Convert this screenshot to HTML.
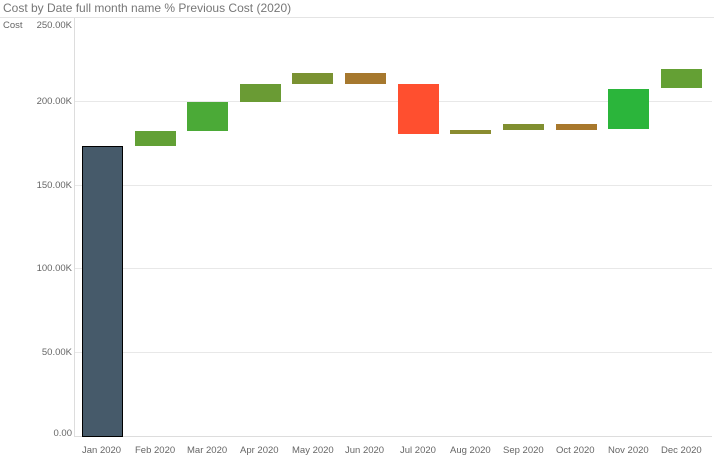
<!DOCTYPE html>
<html><head><style>
body{margin:0;width:714px;height:463px;background:#fff;font-family:"Liberation Sans",sans-serif;overflow:hidden;position:relative}
.t{position:absolute;left:3px;top:1px;font-size:12px;color:#777}
.l{position:absolute;font-size:9.5px;color:#666}
.y{right:642px;text-align:right}
.g{position:absolute;left:75px;width:637px;height:1px;background:#e8e8e8}
.b{position:absolute;width:41px}
</style></head><body>
<div class="t">Cost by Date full month name % Previous Cost (2020)</div>
<div style="position:absolute;left:0;top:17px;width:714px;height:1px;background:#e4e4e4"></div>
<div class="l" style="left:3px;top:20px">Cost</div>
<div class="l y" style="top:20px">250.00K</div>
<div class="l y" style="top:96px">200.00K</div>
<div class="l y" style="top:180px">150.00K</div>
<div class="l y" style="top:263px">100.00K</div>
<div class="l y" style="top:347px">50.00K</div>
<div class="l y" style="top:428px">0.00</div>
<div class="g" style="top:101px"></div>
<div class="g" style="top:185px"></div>
<div class="g" style="top:268px"></div>
<div class="g" style="top:352px"></div>
<div style="position:absolute;left:74px;top:18px;width:1px;height:419px;background:#ddd"></div>
<div style="position:absolute;left:74px;top:436px;width:638px;height:1px;background:#ddd"></div>
<div class="b" style="left:82px;top:146px;height:289px;background:#465a6a;border:1px solid #000;width:39px"></div>
<div class="b" style="left:135px;top:131px;height:15px;background:#62a035"></div>
<div class="b" style="left:187px;top:102px;height:29px;background:#4baa37"></div>
<div class="b" style="left:240px;top:84px;height:18px;background:#6a9b34"></div>
<div class="b" style="left:292px;top:73px;height:11px;background:#7a9232"></div>
<div class="b" style="left:345px;top:73px;height:11px;background:#a6782e"></div>
<div class="b" style="left:398px;top:84px;height:50px;background:#ff4f2f"></div>
<div class="b" style="left:450px;top:130px;height:4px;background:#8a8c30"></div>
<div class="b" style="left:503px;top:124px;height:6px;background:#808f30"></div>
<div class="b" style="left:556px;top:124px;height:6px;background:#a8782c"></div>
<div class="b" style="left:608px;top:89px;height:40px;background:#2bb53b"></div>
<div class="b" style="left:661px;top:69px;height:19px;background:#64a034"></div>
<div class="l" style="top:445px;left:82px">Jan 2020</div>
<div class="l" style="top:445px;left:135px">Feb 2020</div>
<div class="l" style="top:445px;left:187px">Mar 2020</div>
<div class="l" style="top:445px;left:240px">Apr 2020</div>
<div class="l" style="top:445px;left:292px">May 2020</div>
<div class="l" style="top:445px;left:345px">Jun 2020</div>
<div class="l" style="top:445px;left:400px">Jul 2020</div>
<div class="l" style="top:445px;left:450px">Aug 2020</div>
<div class="l" style="top:445px;left:503px">Sep 2020</div>
<div class="l" style="top:445px;left:556px">Oct 2020</div>
<div class="l" style="top:445px;left:608px">Nov 2020</div>
<div class="l" style="top:445px;left:661px">Dec 2020</div>
</body></html>
